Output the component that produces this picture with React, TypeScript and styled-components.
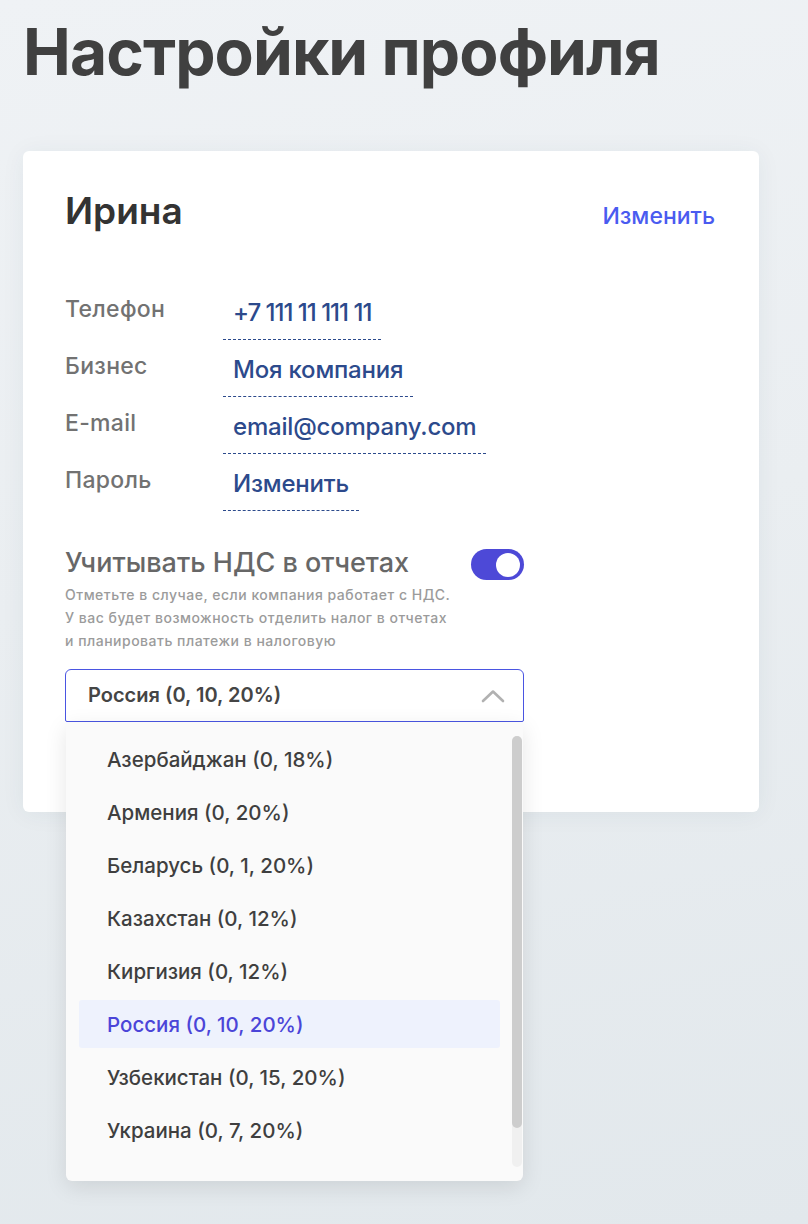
import * as React from 'react';
import styled, { createGlobalStyle } from 'styled-components';

const GlobalStyle = createGlobalStyle`
  html, body {
    margin: 0;
    padding: 0;
  }
  body {
    min-height: 1224px;
    background: linear-gradient(170deg, #eff2f5 0%, #eaeef1 45%, #e2e8ec 100%);
    font-family: Inter, "Noto Sans", sans-serif;
    -webkit-font-smoothing: antialiased;
  }
`;

const Page = styled.div`
  padding: 13px 49px 40px 23px;
`;

const Title = styled.h1`
  margin: 0 0 60px 0;
  font-size: 64px;
  line-height: 78px;
  font-weight: 700;
  letter-spacing: -0.9px;
  color: #404040;
`;

const Card = styled.section`
  width: 736px;
  box-sizing: border-box;
  padding: 37px 44px 90px 42px;
  background: #fff;
  border-radius: 6px;
  box-shadow: 0 2px 24px rgba(40, 60, 80, 0.06);
`;

const CardHeader = styled.div`
  display: flex;
  justify-content: space-between;
  align-items: baseline;
  margin-bottom: 60px;
`;

const Name = styled.h2`
  margin: 0;
  font-size: 37px;
  line-height: 46px;
  font-weight: 600;
  color: #333;
`;

const EditLink = styled.a`
  font-size: 23px;
  line-height: 30px;
  font-weight: 500;
  color: #4a5bf0;
  text-decoration: none;
`;

const Fields = styled.div`
  display: grid;
  grid-template-columns: 158px auto;
  justify-content: start;
  row-gap: 11px;
  margin-bottom: 35px;
`;

const Label = styled.span`
  font-size: 23px;
  line-height: 30px;
  font-weight: 500;
  letter-spacing: 0.3px;
  color: #727272;
`;

const Value = styled.span<{ $tight?: boolean }>`
  justify-self: start;
  padding: 4px 10px 11px;
  font-size: 24px;
  line-height: 30px;
  font-weight: 500;
  letter-spacing: ${p => (p.$tight ? '-1px' : '-0.2px')};
  color: #2c4a8c;
  border-bottom: 1px dashed #2c4a8c;
`;

const VatBlock = styled.div`
  width: 459px;
`;

const VatRow = styled.div`
  display: flex;
  justify-content: space-between;
  align-items: flex-start;
`;

const VatTitle = styled.div`
  font-size: 27px;
  line-height: 34px;
  font-weight: 500;
  color: #676767;
`;

const Toggle = styled.span<{ $on: boolean }>`
  position: relative;
  margin-top: 3px;
  width: 53px;
  height: 31px;
  border-radius: 16px;
  background: ${p => (p.$on ? '#4d49d7' : '#ccc')};

  &::after {
    content: '';
    position: absolute;
    top: 3.5px;
    left: ${p => (p.$on ? '25px' : '4px')};
    width: 24px;
    height: 24px;
    border-radius: 50%;
    background: #fff;
  }
`;

const Hint = styled.p`
  margin: 3px 0 17px;
  font-size: 14px;
  line-height: 23px;
  font-weight: 500;
  letter-spacing: 0.5px;
  color: #9b9b9b;
`;

const SelectWrap = styled.div`
  position: relative;
`;

const Select = styled.div`
  display: flex;
  align-items: center;
  justify-content: space-between;
  height: 53px;
  box-sizing: border-box;
  padding: 0 18px 0 22px;
  border: 1px solid #4a55e2;
  border-radius: 6px 6px 2px 2px;
  font-size: 20px;
  line-height: 25px;
  font-weight: 600;
  color: #454545;
`;

const Dropdown = styled.div`
  position: absolute;
  left: 1px;
  right: 1px;
  top: 100%;
  height: 459px;
  box-sizing: border-box;
  padding: 13px 23px 0 13px;
  background: #fafafa;
  border-radius: 0 0 6px 6px;
  box-shadow: 0 6px 22px rgba(0, 0, 0, 0.1);
  overflow: hidden;
`;

const Options = styled.ul`
  list-style: none;
  margin: 0;
  padding: 0;
  display: flex;
  flex-direction: column;
  gap: 5px;
`;

const Option = styled.li<{ $active?: boolean }>`
  height: 48px;
  display: flex;
  align-items: center;
  padding-left: 28px;
  border-radius: 3px;
  font-size: 20.5px;
  font-weight: 500;
  color: ${p => (p.$active ? '#4b45d8' : '#3f3f3f')};
  background: ${p => (p.$active ? '#eef2fd' : 'transparent')};
`;

const ScrollTrack = styled.div`
  position: absolute;
  top: 14px;
  right: 1px;
  width: 10px;
  height: 431px;
  border-radius: 5px;
  background: #f0f0f0;
`;

const ScrollThumb = styled.div`
  height: 392px;
  border-radius: 5px;
  background: #cdcdcd;
`;

const fields: [string, string][] = [
  ['Телефон', '+7 111 11 111 11'],
  ['Бизнес', 'Моя компания'],
  ['E-mail', 'email@company.com'],
  ['Пароль', 'Изменить'],
];

const countries = [
  'Азербайджан (0, 18%)',
  'Армения (0, 20%)',
  'Беларусь (0, 1, 20%)',
  'Казахстан (0, 12%)',
  'Киргизия (0, 12%)',
  'Россия (0, 10, 20%)',
  'Узбекистан (0, 15, 20%)',
  'Украина (0, 7, 20%)',
];

const Chevron = () => (
  <svg width="24" height="14" viewBox="0 0 24 14" fill="none">
    <path d="M2 12L12 2.5L22 12" stroke="#b1b1b1" strokeWidth="2.6" strokeLinecap="round" strokeLinejoin="round" />
  </svg>
);

const App = () => {
  const selected = 'Россия (0, 10, 20%)';
  return (
    <Page>
      <GlobalStyle />
      <Title>Настройки профиля</Title>
      <Card>
        <CardHeader>
          <Name>Ирина</Name>
          <EditLink href="#">Изменить</EditLink>
        </CardHeader>
        <Fields>
          {fields.map(([label, value]) => (
            <React.Fragment key={label}>
              <Label>{label}</Label>
              <Value $tight={label === 'Телефон'}>{value}</Value>
            </React.Fragment>
          ))}
        </Fields>
        <VatBlock>
          <VatRow>
            <VatTitle>Учитывать НДС в отчетах</VatTitle>
            <Toggle $on />
          </VatRow>
          <Hint>
            Отметьте в случае, если компания работает с НДС.
            <br />
            У вас будет возможность отделить налог в отчетах
            <br />
            и планировать платежи в налоговую
          </Hint>
          <SelectWrap>
            <Select>
              {selected}
              <Chevron />
            </Select>
            <Dropdown>
              <Options>
                {countries.map(c => (
                  <Option key={c} $active={c === selected}>{c}</Option>
                ))}
              </Options>
              <ScrollTrack>
                <ScrollThumb />
              </ScrollTrack>
            </Dropdown>
          </SelectWrap>
        </VatBlock>
      </Card>
    </Page>
  );
};

export default App;
